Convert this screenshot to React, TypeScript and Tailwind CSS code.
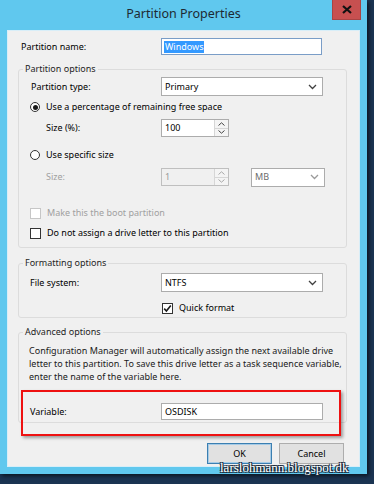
import React from "react";

const font = "font-['Noto_Sans',sans-serif]";

function Chevron({ color = "#404040" }: { color?: string }) {
  return (
    <svg width="9" height="6" viewBox="0 0 9 6" fill="none">
      <path d="M1 1l3.5 3.5L8 1" stroke={color} strokeWidth="1.3" />
    </svg>
  );
}

function Select({
  value,
  width,
  disabled,
}: {
  value: string;
  width: string;
  disabled?: boolean;
}) {
  return (
    <div
      className={`${width} h-[19px] flex items-center justify-between bg-white border border-[#acacac] pl-[3px] pr-[5px]`}
    >
      <span className={disabled ? "text-[#6d6d6d]" : "text-black"}>{value}</span>
      <Chevron color={disabled ? "#9a9a9a" : "#404040"} />
    </div>
  );
}

function Spinner({ value, disabled }: { value: string; disabled?: boolean }) {
  return (
    <div
      className={`w-[68px] h-[18px] flex border ${
        disabled ? "border-[#bfbfbf] bg-[#f0f0f0]" : "border-[#acacac] bg-white"
      }`}
    >
      <div
        className={`flex-1 pl-[3px] flex items-center ${
          disabled ? "text-[#9a9a9a]" : "text-black"
        }`}
      >
        {value}
      </div>
      <div className="w-[14px] flex flex-col border-l border-[#d6d6d6] bg-[#f4f4f4]">
        <div className="flex-1 flex items-center justify-center border-b border-[#d6d6d6]">
          <svg width="7" height="4" viewBox="0 0 7 4" fill="none">
            <path d="M0.5 3.5L3.5 0.8L6.5 3.5" stroke={disabled ? "#a8a8a8" : "#444"} strokeWidth="1" />
          </svg>
        </div>
        <div className="flex-1 flex items-center justify-center">
          <svg width="7" height="4" viewBox="0 0 7 4" fill="none">
            <path d="M0.5 0.5L3.5 3.2L6.5 0.5" stroke={disabled ? "#a8a8a8" : "#444"} strokeWidth="1" />
          </svg>
        </div>
      </div>
    </div>
  );
}

function Radio({ checked, label }: { checked?: boolean; label: string }) {
  return (
    <div className="h-[12px] flex items-center pl-[11px]">
      <div className="w-[10px] h-[10px] rounded-full border border-[#333] bg-white flex items-center justify-center">
        {checked && <div className="w-[5px] h-[5px] rounded-full bg-[#1a1a1a]" />}
      </div>
      <span className="ml-[6px]">{label}</span>
    </div>
  );
}

function Check({
  checked,
  disabled,
  label,
}: {
  checked?: boolean;
  disabled?: boolean;
  label: string;
}) {
  return (
    <div className="h-[12px] flex items-center">
      <div
        className={`w-[11px] h-[11px] border bg-white flex items-center justify-center ${
          disabled ? "border-[#c6c6c6]" : "border-[#333]"
        }`}
      >
        {checked && (
          <svg width="9" height="9" viewBox="0 0 9 9" fill="none">
            <path d="M1.2 4.6L3.4 7L7.8 1.5" stroke="#1a1a1a" strokeWidth="1.6" />
          </svg>
        )}
      </div>
      <span className={`ml-[6px] ${disabled ? "text-[#a0a0a0]" : "text-black"}`}>{label}</span>
    </div>
  );
}

function Group({
  title,
  className,
  children,
}: {
  title: string;
  className: string;
  children: React.ReactNode;
}) {
  return (
    <fieldset className={`border border-[#dcdcdc] rounded-[3px] ${className}`}>
      <legend className="ml-[4px] px-[2px] h-[12px] leading-[12px] text-[#1e1e1e]">{title}</legend>
      {children}
    </fieldset>
  );
}

export default function App() {
  return (
    <div className={`w-[374px] h-[484px] bg-[#1b3452] relative overflow-hidden ${font}`}>
      <div className="w-[367px] h-[474px] bg-[#60c8ee] flex flex-col shadow-[2px_2px_4px_rgba(0,0,0,0.6)]">
        {/* title bar */}
        <div className="h-[30px] flex items-start relative">
          <div className="flex-1 text-center text-[12.5px] leading-[27px] text-[#1d2a33]">
            Partition Properties
          </div>
          <div className="absolute right-[6px] top-0 w-[29px] h-[20px] bg-[#c75050] border border-[#a84444] border-t-0 flex items-center justify-center">
            <svg width="10" height="9" viewBox="0 0 10 9">
              <path d="M1 1l8 7M9 1L1 8" stroke="#111" strokeWidth="2.2" />
            </svg>
          </div>
        </div>

        {/* client */}
        <div className="ml-[7px] w-[353px] h-[437px] bg-[#f0f0f0] border border-[#d8eef8] relative text-[9px] text-black whitespace-nowrap">
          <div className="flex flex-col pl-[10px] pr-[12px]">
            <div className="mt-[7px] h-[17px] flex items-center">
              <div className="w-[143px] pl-[3px]">Partition name:</div>
              <div className="w-[161px] h-[17px] border border-[#7a9dc7] bg-white flex items-center pl-[2px]">
                <span className="bg-[#3399ff] text-white leading-[12px] px-[1px]">Windows</span>
              </div>
            </div>

            <Group title="Partition options" className="mt-[8px] pb-[8px]">
              <div className="mt-[2px] h-[19px] flex items-center">
                <div className="w-[142px] pl-[12px]">Partition type:</div>
                <Select value="Primary" width="w-[162px]" />
              </div>
              <div className="mt-[5px]">
                <Radio checked label="Use a percentage of remaining free space" />
              </div>
              <div className="mt-[6px] h-[18px] flex items-center">
                <div className="w-[142px] pl-[27px]">Size (%):</div>
                <Spinner value="100" />
              </div>
              <div className="mt-[12px]">
                <Radio label="Use specific size" />
              </div>
              <div className="mt-[7px] h-[18px] flex items-center">
                <div className="w-[142px] pl-[27px] text-[#a0a0a0]">Size:</div>
                <Spinner value="1" disabled />
                <div className="ml-[22px]">
                  <Select value="MB" width="w-[74px]" disabled />
                </div>
              </div>
              <div className="mt-[21px] pl-[11px]">
                <Check disabled label="Make this the boot partition" />
              </div>
              <div className="mt-[8px] pl-[11px]">
                <Check label="Do not assign a drive letter to this partition" />
              </div>
            </Group>

            <Group title="Formatting options" className="mt-[9px] pb-[3px]">
              <div className="mt-[4px] h-[19px] flex items-center">
                <div className="w-[142px] pl-[11px]">File system:</div>
                <Select value="NTFS" width="w-[162px]" />
              </div>
              <div className="mt-[10px] pl-[143px]">
                <Check checked label="Quick format" />
              </div>
            </Group>

            <Group title="Advanced options" className="mt-[8px] pb-[2px]">
              <p className="mt-[6px] pl-[10px] leading-[13px] text-[#1a1a1a]">
                Configuration Manager will automatically assign the next available drive
                <br />
                letter to this partition. To save this drive letter as a task sequence variable,
                <br />
                enter the name of the variable here.
              </p>
              <div className="mt-[20px] h-[17px] flex items-center">
                <div className="w-[142px] pl-[11px]">Variable:</div>
                <div className="w-[162px] h-[17px] border border-[#acacac] bg-white flex items-center pl-[3px]">
                  OSDISK
                </div>
              </div>
            </Group>

            <div className="mt-[20px] flex justify-end gap-[7px] pr-[3px]">
              <button className="w-[65px] h-[21px] bg-[#e1e1e1] border border-[#3c7fb1] shadow-[inset_0_0_0_1px_#a6cbe6] leading-[19px]">
                OK
              </button>
              <button className="w-[65px] h-[21px] bg-[#e1e1e1] border border-[#adadad] leading-[19px]">
                Cancel
              </button>
            </div>
          </div>

          {/* annotation */}
          <div className="absolute left-[13px] top-[359px] w-[320px] h-[46px] border-2 border-[#ee1111] shadow-[2px_2px_3px_rgba(0,0,0,0.35)]" />
        </div>
      </div>

      <div className="absolute left-[220px] top-[461px] font-['Liberation_Serif',serif] text-[13px] leading-[14px] text-white [text-shadow:1px_1px_0_#1a2a3a,-1px_-1px_0_#1a2a3a,1px_-1px_0_#1a2a3a,-1px_1px_0_#1a2a3a]">
        larslohmann.blogspot.dk
      </div>
    </div>
  );
}
